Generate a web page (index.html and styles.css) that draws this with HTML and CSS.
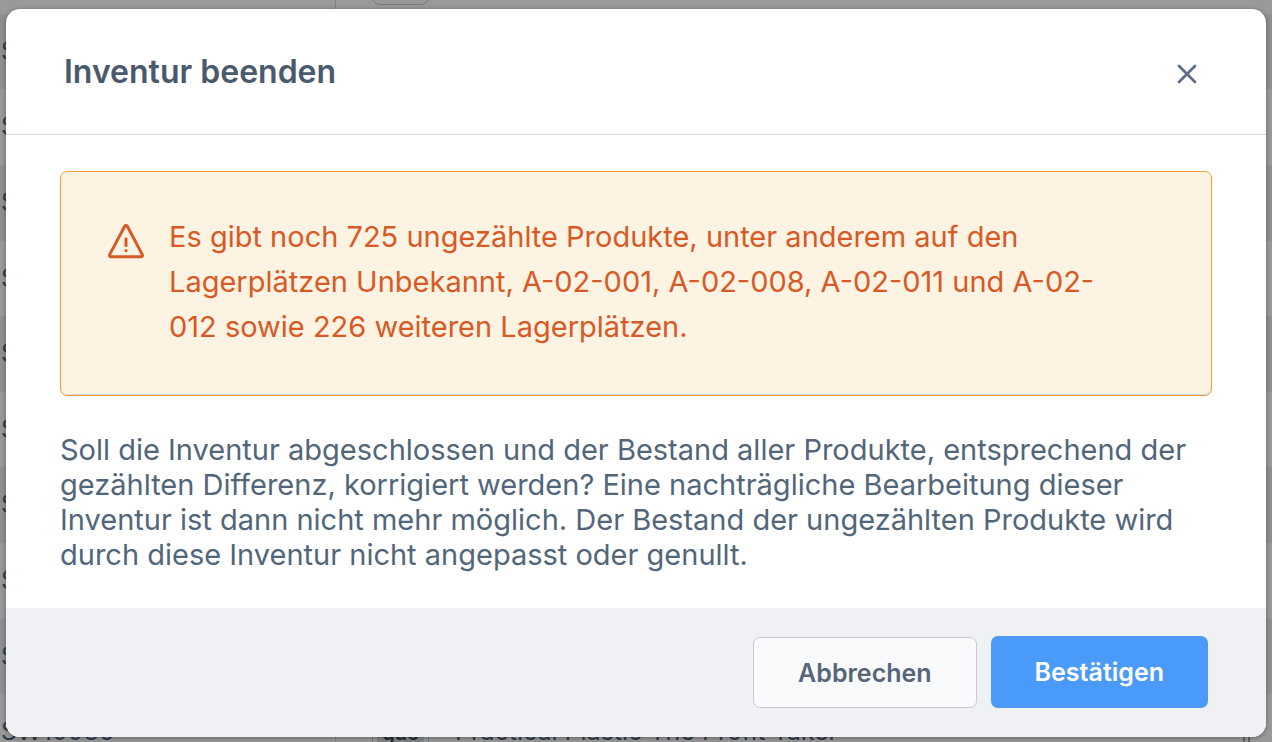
FILE: index.html
```html
<!DOCTYPE html>
<html lang="de">
<head>
<meta charset="utf-8">
<title>Inventur beenden</title>
<link rel="stylesheet" href="styles.css">
</head>
<body>
<div class="page" aria-hidden="true">
  <div class="row row-first"><span class="sku"></span><span class="product"><span class="chip"></span></span></div>
  <div class="row"><span class="sku">S</span></div>
  <div class="row"><span class="sku">S</span></div>
  <div class="row"><span class="sku">S</span></div>
  <div class="row"><span class="sku">S</span></div>
  <div class="row"><span class="sku">S</span></div>
  <div class="row"><span class="sku">S</span></div>
  <div class="row"><span class="sku">S</span></div>
  <div class="row"><span class="sku">S</span></div>
  <div class="row"><span class="sku">S</span></div>
  <div class="row"><span class="sku">SW10086</span><span class="product"><span class="chip"><span class="chip-label">que</span></span><span class="name">Practical Plastic The Profit Taker</span><span class="handle"></span></span></div>
</div>
<div class="backdrop">
  <section class="modal" role="dialog" aria-modal="true" aria-labelledby="modal-title">
    <header class="modal-header">
      <h1 class="modal-title" id="modal-title">Inventur beenden</h1>
      <button class="close" type="button" aria-label="Schließen">
        <svg width="20" height="20" viewBox="0 0 20 20" fill="none" stroke="currentColor" stroke-width="2.7" stroke-linecap="round"><path d="M2 2l16 16M18 2L2 18"/></svg>
      </button>
    </header>
    <div class="modal-body">
      <div class="alert" role="alert">
        <svg class="alert-icon" width="36" height="36" viewBox="0 0 36 36" fill="none" stroke="currentColor" stroke-linecap="round" stroke-linejoin="round"><path stroke-width="3" d="M16.7 3.2Q18 1.4 19.3 3.2L34.2 31.4Q35 33.8 32.8 33.8H3.2Q1 33.8 1.8 31.4Z"/><path stroke-width="3" d="M18 15.8V22.4"/><circle cx="18" cy="27.6" r="1.6" fill="currentColor" stroke="none"/></svg>
        <p class="alert-text">Es gibt noch 725 ungezählte Produkte, unter anderem auf den Lagerplätzen Unbekannt, A-02-001, A-02-008, A-02-011 und A-02-012 sowie 226 weiteren Lagerplätzen.</p>
      </div>
      <p class="message">Soll die Inventur abgeschlossen und der Bestand aller Produkte, entsprechend der gezählten Differenz, korrigiert werden? Eine nachträgliche Bearbeitung dieser Inventur ist dann nicht mehr möglich. Der Bestand der ungezählten Produkte wird durch diese Inventur nicht angepasst oder genullt.</p>
    </div>
    <footer class="modal-footer">
      <button class="button button-secondary" type="button">Abbrechen</button>
      <button class="button button-primary" type="button">Bestätigen</button>
    </footer>
  </section>
</div>
</body>
</html>
```
FILE: styles.css
```css
* { box-sizing: border-box; }
body {
  margin: 0;
  height: 100vh;
  overflow: hidden;
  font-family: Inter, "Liberation Sans", sans-serif;
  font-size: 25px;
  color: #52667a;
}
.page {
  position: fixed;
  inset: 0;
  display: grid;
  grid-template-rows: 14px;
  grid-auto-rows: 75px 76px 76px 75px 76px;
  align-content: start;
  overflow: hidden;
  background: #fff;
}
.row {
  display: grid;
  grid-template-columns: 336px 1fr;
  grid-template-rows: 100%;
}
.row:nth-child(even) { background: #eff1f4; }
.sku {
  display: flex;
  align-items: center;
  padding: 0 0 2px 1px;
  border-right: 1px solid #d1d9e0;
}
.product {
  display: flex;
  align-items: center;
  padding: 0 22px 2px 36px;
  gap: 26px;
}
.row-first .product { align-items: flex-end; padding-bottom: 9px; }
.chip {
  display: flex;
  width: 57px;
  height: 50px;
  padding: 4px;
  border: 1px solid #c2cad4;
  border-radius: 8px;
}
.chip-label {
  flex: 1;
  font-size: 20px;
  font-weight: 600;
  line-height: 44px;
  text-align: center;
  background: #d8dbe0;
  color: #414a58;
}
.name { flex: 1; }
.handle {
  width: 7px;
  height: 40px;
  border: solid #9aa8b5;
  border-width: 0 2px;
}
.backdrop {
  position: fixed;
  inset: 0;
  padding: 9px 6px 5px;
  background: rgba(0, 0, 0, 0.4);
}
.modal {
  display: flex;
  flex-direction: column;
  height: 100%;
  overflow: hidden;
  background: #fff;
  border-radius: 14px;
  box-shadow: 0 1px 5px rgba(0, 0, 0, 0.35);
}
.modal-header {
  display: flex;
  align-items: center;
  justify-content: space-between;
  padding: 42px 58px 41px;
  border-bottom: 1px solid #d1d9e0;
}
.modal-title {
  margin: 0;
  font-size: 32px;
  font-weight: 600;
  line-height: 42px;
  color: #4a596c;
}
.close {
  display: grid;
  place-items: center;
  width: 42px;
  height: 42px;
  padding: 4px 0 0;
  border: 0;
  background: none;
  color: #5b6c84;
}
.modal-body { flex: 1; padding: 36px 54px; }
.alert {
  display: flex;
  align-items: flex-start;
  gap: 25px;
  padding: 42px 100px 46px 47px;
  border: 1px solid #f0a03c;
  border-radius: 7px;
  background: #fdf3e2;
  box-shadow: inset 0 -1px 0 #d1d9e0;
  color: #d75a26;
}
.alert-icon { flex: none; margin-top: 9px; }
.alert-text { margin: 0; font-size: 29px; line-height: 45px; }
.message { margin: 36px 0 0; font-size: 29px; line-height: 35px; }
.modal-footer {
  display: flex;
  align-items: flex-end;
  justify-content: flex-end;
  gap: 14px;
  padding: 28px 58px 29px;
  background: #f0f1f5;
}
.button {
  height: 72px;
  padding: 0 44px;
  border: 0;
  border-radius: 7px;
  font-family: inherit;
  font-size: 25px;
  font-weight: 600;
}
.button-secondary {
  height: 71px;
  border: 1px solid #c5cbd5;
  background: #f9fafc;
  color: #56657a;
}
.button-primary { background: #4a9bf9; color: #fff; }
```
